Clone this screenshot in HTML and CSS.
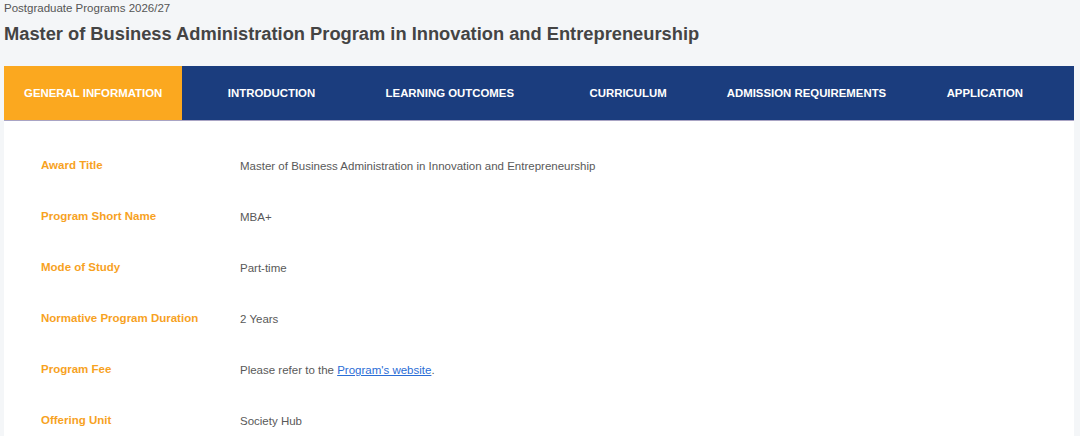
FILE: index.html
```html
<!DOCTYPE html>
<html lang="en">
<head>
  <meta charset="UTF-8">
  <title>MBA+ - General Information</title>
  <link rel="stylesheet" href="styles.css">
</head>
<body>
  <div class="page-head">
    <p class="kicker">Postgraduate Programs 2026/27</p>
    <h1>Master of Business Administration Program in Innovation and Entrepreneurship</h1>
  </div>

  <div class="card">
    <nav class="tabs">
      <a class="tab active" href="#">General Information</a>
      <a class="tab" href="#">Introduction</a>
      <a class="tab" href="#">Learning Outcomes</a>
      <a class="tab" href="#">Curriculum</a>
      <a class="tab" href="#">Admission Requirements</a>
      <a class="tab" href="#">Application</a>
    </nav>

    <!-- general information table -->
    <div class="info">
      <div class="row">
        <div class="label">Award Title</div>
        <div class="value">Master of Business Administration in Innovation and Entrepreneurship</div>
      </div>
      <div class="row">
        <div class="label">Program Short Name</div>
        <div class="value">MBA+</div>
      </div>
      <div class="row">
        <div class="label">Mode of Study</div>
        <div class="value">Part-time</div>
      </div>
      <div class="row">
        <div class="label">Normative Program Duration</div>
        <div class="value">2 Years</div>
      </div>
      <div class="row">
        <div class="label">Program Fee</div>
        <div class="value">Please refer to the <a href="#">Program's website</a>.</div>
      </div>
      <div class="row">
        <div class="label">Offering Unit</div>
        <div class="value">Society Hub</div>
      </div>
    </div>
  </div>
</body>
</html>
```

FILE: styles.css
```css
body {
  font-family: Arial, "Liberation Sans", sans-serif;
  margin: 0;
  padding: 0 6px 0 4px;
  background: #f4f6f8;
  color: #555;
  overflow: hidden;
}
.page-head {
  padding-top: 1px;
  height: 65px;
}
.kicker {
  margin: 0;
  font-size: 11.5px;
  line-height: 14px;
  color: #555;
}
h1 {
  margin: 8px 0 0;
  font-size: 18.3px;
  line-height: 22px;
  color: #444;
}
.card {
  background: #fff;
  min-height: 370px;
}
.tabs {
  display: flex;
  background: #1b3d7e;
  border-bottom: 1px solid #a9a4c4;
  height: 54px;
}
.tab {
  flex: 1;
  display: flex;
  align-items: center;
  justify-content: center;
  color: #fff;
  text-decoration: none;
  text-transform: uppercase;
  font-size: 11.4px;
  font-weight: bold;
}
.tab.active {
  background: #fba81f;
}
.info {
  padding: 37px 0 0 37px;
}
.row {
  display: flex;
  height: 51px;
  font-size: 11.5px;
  line-height: 14px;
}
.label {
  width: 199px;
  color: #f7a21f;
  font-weight: bold;
}
.value {
  color: #595959;
  padding-top: 1px;
}
.value a {
  color: #2a6dd6;
}
```
